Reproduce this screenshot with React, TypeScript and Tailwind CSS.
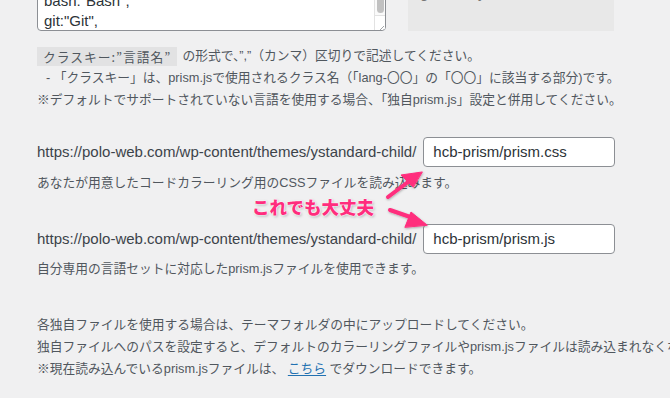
import React from 'react'

const sans = '[font-family:"Liberation_Sans","Noto_Sans_CJK_JP",sans-serif]'
const cjk = '[font-family:"Noto_Sans_CJK_JP",sans-serif]'

function PathRow({ value }: { value: string }) {
  return (
    <div className="flex items-center h-[30px]">
      <span className="text-[15px] text-[#3c434a]">
        https://polo-web.com/wp-content/themes/ystandard-child/
      </span>
      <div className="ml-[7px] w-[192px] h-[30px] bg-white border border-[#8c8f94] rounded-[4px] flex items-center px-[9px] text-[15px] text-[#2c3338]">
        {value}
      </div>
    </div>
  )
}

function App() {
  return (
    <div className={`relative w-[670px] h-[398px] overflow-hidden bg-[#f0f0f1] text-[#50575e] ${sans}`}>
      {/* top: textarea + side box, cut by the window */}
      <div className="flex items-end mt-[-32px] pl-[37px]">
        <div className="relative w-[349px] h-[62px] bg-white border border-[#8c8f94] rounded-[4px] overflow-hidden">
          <div className="pl-[6px] pt-[1px] text-[15px] leading-[20px] text-[#2c3338]">
            <div>html:"HTML",</div>
            <div>bash:"Bash",</div>
            <div>git:"Git",</div>
          </div>
          <div className="absolute right-0 top-0 bottom-0 w-[11px] border-l border-[#e2e2e2] bg-[#fafafa]">
            <div className="mx-auto mt-[20px] w-[7px] h-[23px] rounded-full bg-[#c1c1c1]" />
          </div>
          <div className="absolute right-0 bottom-0 w-[11px] h-[15px] bg-white border-l border-t border-[#e2e2e2]">
            <svg width="11" height="15" viewBox="0 0 11 15" className="absolute inset-0">
              <path d="M9 10 L4 15 M9 13 L7 15" stroke="#8c8f94" strokeWidth="0.8" />
            </svg>
          </div>
        </div>
        <div className="ml-[22px] w-[206px] h-[63px] bg-[#e8e8e8] relative overflow-hidden">
          <div className="absolute left-[12px] top-[14px] text-[15px] text-[#777] tracking-[9px]">g:&quot;;y</div>
        </div>
      </div>

      {/* class key explanation */}
      <div className="pl-[37px] pt-[14px] text-[12.75px] leading-[22px]">
        <div className="flex items-center">
          <span className={`bg-[#e2e2e3] px-[6px] h-[19px] leading-[19px] tracking-[1px] ${cjk}`}>クラスキー:”言語名”</span>
          <span className="ml-[5px]">の形式で、”,”（カンマ）区切りで記述してください。</span>
        </div>
        <div className="pl-[9px]">- 「クラスキー」は、prism.jsで使用されるクラス名（「lang-〇〇」の「〇〇」に該当する部分)です。</div>
        <div>※デフォルトでサポートされていない言語を使用する場合、「独自prism.js」設定と併用してください。</div>
      </div>

      {/* css path */}
      <div className="pl-[37px] pt-[26px]">
        <PathRow value="hcb-prism/prism.css" />
        <div className="mt-[6px] text-[12.75px] leading-[20px]">あなたが用意したコードカラーリング用のCSSファイルを読み込みます。</div>
      </div>

      {/* js path */}
      <div className="pl-[37px] pt-[31px]">
        <PathRow value="hcb-prism/prism.js" />
        <div className="mt-[5px] text-[12.75px] leading-[20px]">自分専用の言語セットに対応したprism.jsファイルを使用できます。</div>
      </div>

      {/* notes */}
      <div className="pl-[37px] pt-[35px] text-[12.75px] leading-[22px] whitespace-nowrap">
        <div>各独自ファイルを使用する場合は、テーマフォルダの中にアップロードしてください。</div>
        <div>独自ファイルへのパスを設定すると、デフォルトのカラーリングファイルやprism.jsファイルは読み込まれなくなります。</div>
        <div>
          ※現在読み込んでいるprism.jsファイルは、 <span className="text-[#2271b1] underline underline-offset-2">こちら</span> でダウンロードできます。
        </div>
      </div>

      {/* annotation */}
      <div className={`absolute left-[252px] top-[196px] text-[17.5px] font-black leading-[22px] text-[#ff2d7d] ${cjk} [text-shadow:0_0_2px_#fff,0_0_2px_#fff,0_0_1px_#fff,1px_1px_3px_rgba(0,0,0,0.35)]`}>
        これでも大丈夫
      </div>
      <svg className="absolute left-0 top-0" width="670" height="398" viewBox="0 0 670 398">
        <defs>
          <filter id="sh" x="-20%" y="-20%" width="140%" height="140%">
            <feDropShadow dx="0.5" dy="1" stdDeviation="1" floodColor="#000" floodOpacity="0.3" />
          </filter>
        </defs>
        <g filter="url(#sh)" fill="#ff2d7d" stroke="#ff2d7d" strokeLinecap="round">
          <line x1="388" y1="197" x2="412" y2="179" strokeWidth="4" />
          <polygon points="422,172 401,175 413,187" />
          <line x1="390" y1="210" x2="416" y2="219" strokeWidth="4" />
          <polygon points="427,225 411,212 405,227" />
        </g>
      </svg>
    </div>
  )
}

export default App
